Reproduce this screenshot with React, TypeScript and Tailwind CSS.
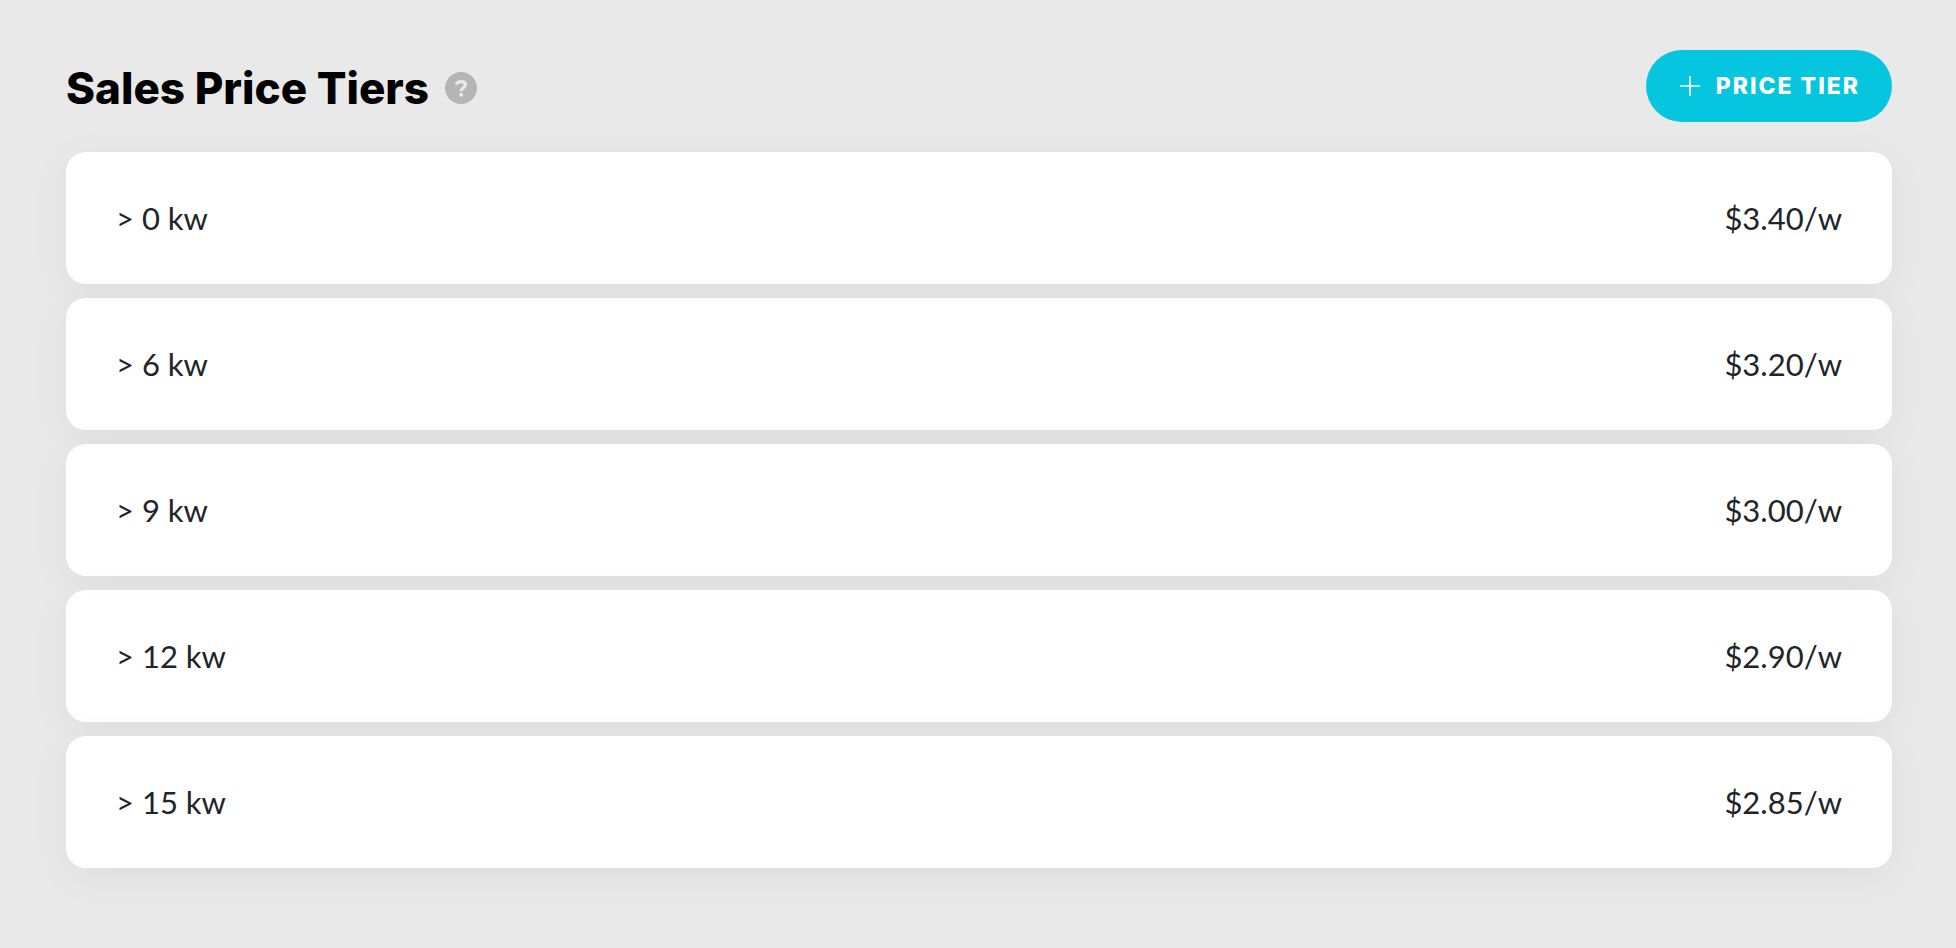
import { Plus } from "lucide-react";

const priceTiers = [
  { id: 1, size: "> 0 kw", price: "$3.40/w" },
  { id: 2, size: "> 6 kw", price: "$3.20/w" },
  { id: 3, size: "> 9 kw", price: "$3.00/w" },
  { id: 4, size: "> 12 kw", price: "$2.90/w" },
  { id: 5, size: "> 15 kw", price: "$2.85/w" },
];

const App = () => {
  return (
    <main className="min-h-screen bg-[#e9e9e9] pt-[50px] pr-16 pb-16 pl-[66px] font-['Lato',sans-serif]">
      <header className="mb-[30px] flex items-center justify-between">
        <div className="flex items-center gap-4 pt-1">
          <h1 className="font-['Inter',sans-serif] text-[44px] leading-[56px] font-extrabold text-black">
            Sales Price Tiers
          </h1>
          <button
            type="button"
            aria-label="Help"
            className="flex size-8 items-center justify-center rounded-full bg-[#b5b5b5] text-[#e9e9e9]"
          >
            <svg
              viewBox="0 0 32 32"
              className="size-8"
              fill="none"
              stroke="currentColor"
              strokeWidth="3.4"
            >
              <path d="M11.2 12.4C12 10.4 13.8 9.6 16 9.6c2.8 0 4.4 1.3 4.4 3.2 0 3.2-4.2 2.8-4.2 6.4" />
              <circle cx="16.2" cy="22.8" r="2" fill="currentColor" stroke="none" />
            </svg>
          </button>
        </div>
        <button
          type="button"
          className="flex h-[72px] items-center gap-[10px] rounded-full bg-[#06c5de] pr-8 pl-7 font-['Inter',sans-serif] text-[23px] leading-7 font-extrabold tracking-[2px] text-white"
        >
          <Plus className="size-8" strokeWidth={1.3} />
          PRICE TIER
        </button>
      </header>
      <ul className="flex flex-col gap-[14px]">
        {priceTiers.map((tier) => (
          <li
            key={tier.id}
            className="rounded-[20px] bg-white p-[2px] shadow-[0_8px_40px_rgba(0,0,0,0.05)]"
          >
            <div className="flex h-32 items-center justify-between rounded-[18px] border border-[#fcfcfc] px-[47px] text-[31px] leading-10 text-[#212529]">
              <span>{tier.size}</span>
              <span>{tier.price}</span>
            </div>
          </li>
        ))}
      </ul>
    </main>
  );
};

export default App;
